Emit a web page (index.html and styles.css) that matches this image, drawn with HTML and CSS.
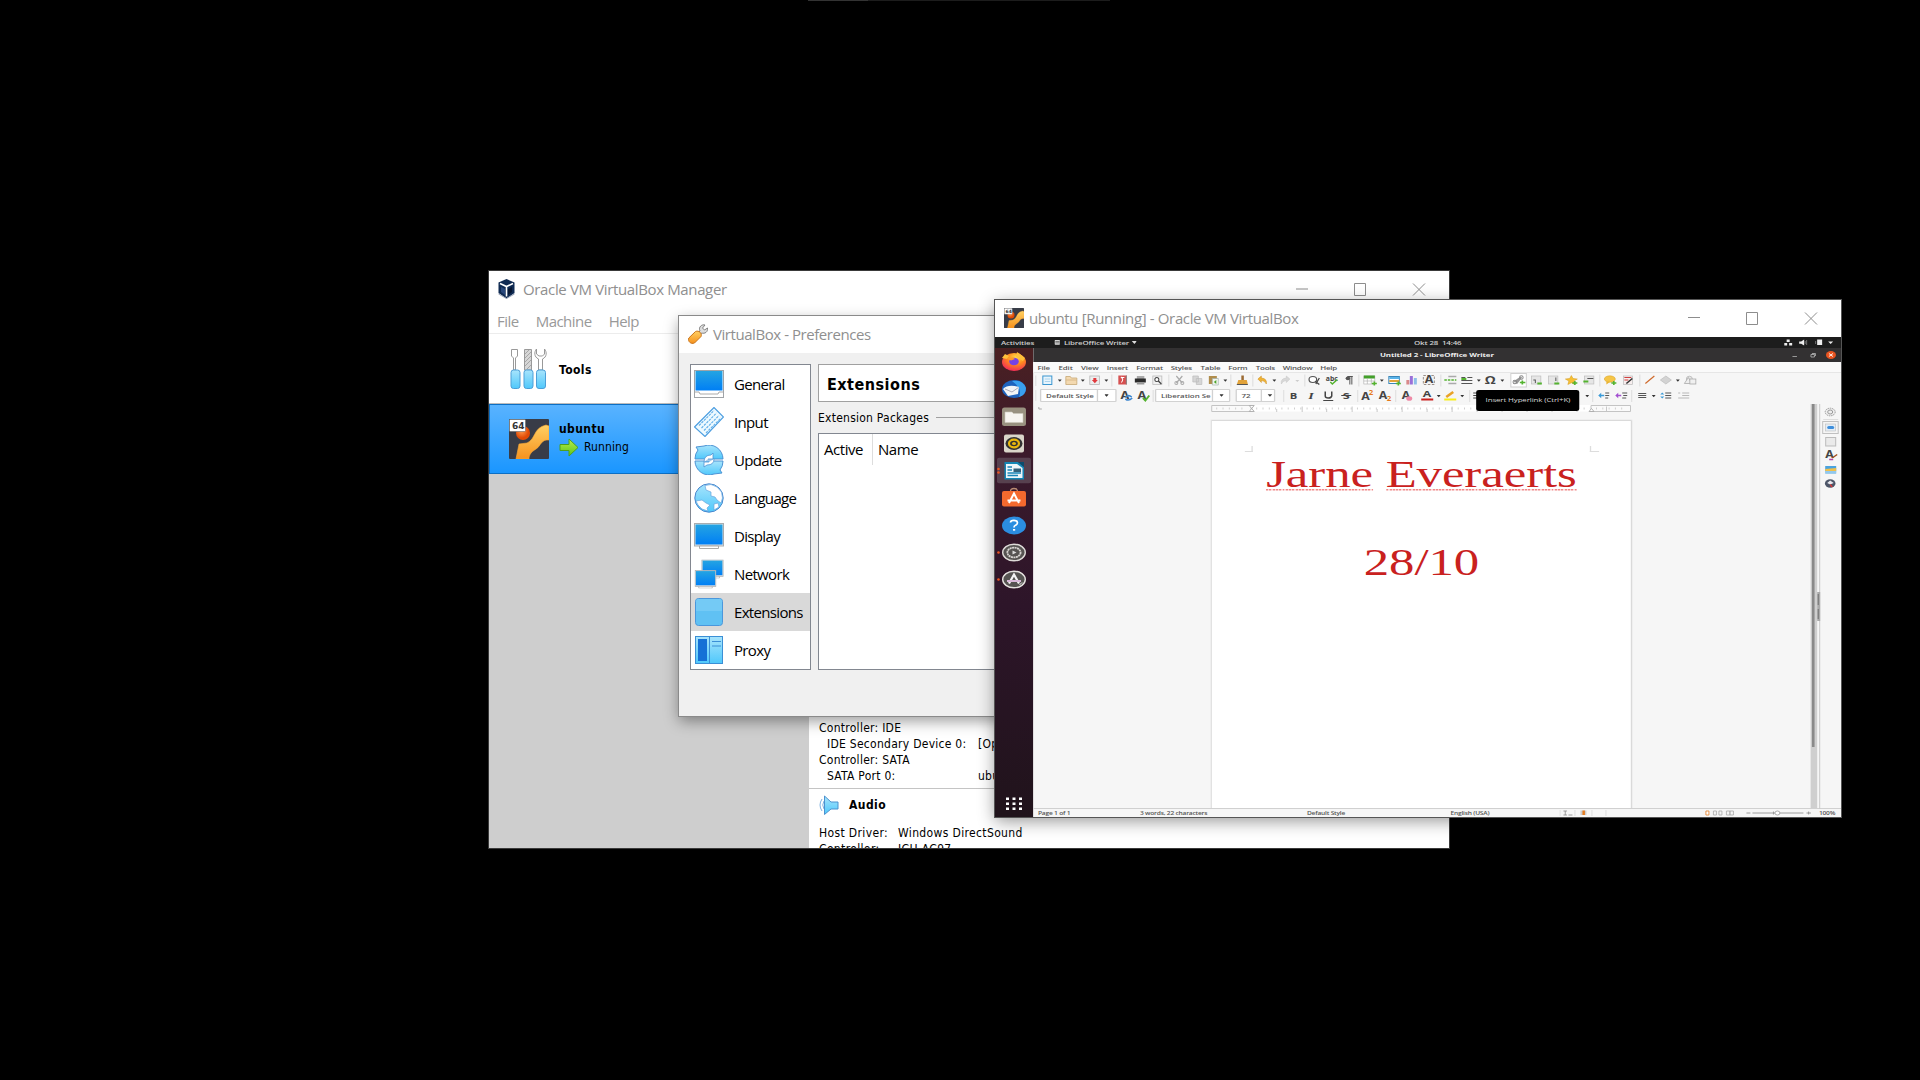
FILE: index.html
```html
<!DOCTYPE html>
<html lang="en">
<head>
<meta charset="utf-8">
<title>Desktop</title>
<link rel="stylesheet" href="styles.css">
</head>
<body>
<svg class="defs" width="0" height="0">
  <defs>
    <linearGradient id="blue" x1="0" y1="0" x2="0" y2="1"><stop offset="0" stop-color="#25a4e2"/><stop offset="1" stop-color="#007ff5"/></linearGradient>
    <linearGradient id="sky" x1="0" y1="0" x2="0" y2="1"><stop offset="0" stop-color="#a8e4fc"/><stop offset="1" stop-color="#4fc8fb"/></linearGradient>
    <linearGradient id="orange" x1="0" y1="0" x2="0" y2="1"><stop offset="0" stop-color="#ffd063"/><stop offset="1" stop-color="#f6921e"/></linearGradient>
    <radialGradient id="ball" cx=".4" cy=".35"><stop offset="0" stop-color="#ff9a4d"/><stop offset="1" stop-color="#e04a05"/></radialGradient>
    <linearGradient id="leaf" x1="0" y1="0" x2="0" y2="1"><stop offset="0" stop-color="#b9ee4c"/><stop offset="1" stop-color="#5cc41b"/></linearGradient>
    <radialGradient id="fox" cx=".6" cy=".25" r=".8"><stop offset="0" stop-color="#ffe14a"/><stop offset=".45" stop-color="#ff8a1e"/><stop offset="1" stop-color="#f0245c"/></radialGradient>
    <symbol id="vm" viewBox="0 0 40 40">
      <rect width="40" height="40" rx="1" fill="#383c47"/>
      <path d="M7 40 10 25 18 24C27 20 24 9 37 6L40 7V21C32 20 32 27 27 30 22 33 20 36 20 40Z" fill="url(#orange)" stroke="#f9a835" stroke-width=".6"/>
      <circle cx="14" cy="14" r="7" fill="url(#ball)"/>
      <rect x=".5" y=".5" width="16" height="12" rx="1" fill="#fff" stroke="#666" stroke-width=".6"/>
      <text x="3" y="10" class="bit">64</text>
    </symbol>
    <symbol id="screen" viewBox="0 0 30 26"><rect x=".5" y=".5" width="29" height="22.5" fill="#dfe3e5" stroke="#a9adb0"/><rect x="1.5" y="1.5" width="27" height="20" fill="url(#blue)"/><path d="M5.5 23H24.5V25.5H5.5Z" fill="#fff" stroke="#aaa"/></symbol>
    <symbol id="dn" viewBox="0 0 4 3"><path d="M0 .5H4L2 2.7Z" fill="#333"/></symbol>
  </defs>
</svg>
<div class="strip"></div>

<section class="window manager">
  <header class="caption">
    <svg class="logo" viewBox="0 0 17 20"><path d="M8.500 0 16.500 3.500V14L8.500 19.500.500 14V3.500Z" fill="#0f2a52"/><path d="M2 4.500 8.500 7.500 15 4.500M8.500 7.500V17.500" stroke="#fff" stroke-width="1.600" fill="none"/><path d="M3 8 7 10V16L3 13Z" fill="#29487c"/><path d="M14 8 10 10V16L14 13Z" fill="#06152f"/><path d="M.500 15 8.500 19.500 16.500 15" stroke="#9aa5b8" fill="none"/></svg>
    <h1>Oracle VM VirtualBox Manager</h1>
    <svg class="controls" viewBox="0 0 130 13"><path d="M0 6H12M58.500.500H69.500V12.500H58.500ZM117 .500 129 12.500M129 .500 117 12.500" stroke="#8d8d8d" fill="none"/></svg>
  </header>
  <nav class="menubar"><span>File</span><span>Machine</span><span>Help</span></nav>
  <div class="split">
    <div class="vmlist">
      <div class="entry">
        <svg class="big" viewBox="0 0 40 42"><g stroke="#999" fill="#fff"><path d="M2.500 1.500H8.500V8L6.500 10V22H4.500V10L2.500 8Z"/><path d="M15.500 1.500H22.500V22H15.500Z" fill="#d6d6d6"/><path d="M27.500 1C25 4 25 9 29.500 11V22H33.500V11C38 9 38 4 35.500 1V6L33.500 8H30L27.500 6Z"/></g><path d="M16 6 20 2M16 10 22 4M16 14 22 8M16 18 22 12M18 21 22 17" stroke="#999" stroke-width=".8"/><g fill="url(#sky)" stroke="#4c9fd8"><rect x="2" y="22" width="9" height="18.500" rx="2.500"/><rect x="15" y="22" width="9" height="18.500" rx="2.500"/><rect x="27.500" y="22" width="9" height="18.500" rx="2.500"/></g></svg>
        <b>Tools</b>
      </div>
      <div class="entry active">
        <svg class="big vm" viewBox="0 0 40 40"><use href="#vm"/></svg>
        <div><b>ubuntu</b><p><svg class="run" viewBox="0 0 20 19"><path d="M1 6.500H10V1L19 9.500 10 18V12.500H1Z" fill="url(#leaf)" stroke="#4ea01c"/></svg>Running</p></div>
      </div>
    </div>
    <div class="details">
      <dl class="storage">
        <dt>Controller: IDE</dt><dd></dd>
        <dt class="sub">IDE Secondary Device 0:</dt><dd>[Op</dd>
        <dt>Controller: SATA</dt><dd></dd>
        <dt class="sub">SATA Port 0:</dt><dd>ubu</dd>
      </dl>
      <h2><svg viewBox="0 0 20 20"><path d="M3 4Q-1 10 3 16M5 6Q2.500 10 5 14" fill="none" stroke="#7fb2e0"/><path d="M5.500 1 12 7H19V14H12L5.500 19.500Z" fill="url(#sky)" stroke="#4c92cf"/></svg>Audio</h2>
      <dl class="audio">
        <dt>Host Driver:</dt><dd>Windows DirectSound</dd>
        <dt>Controller:</dt><dd>ICH AC97</dd>
      </dl>
    </div>
  </div>
</section>

<section class="window prefs">
  <header class="caption">
    <svg class="logo" viewBox="0 0 20 20"><path d="M9 10 12 7C10 3 14 0 17 1L14.500 4 16.500 6 19.500 4C20 8 17 10 13.500 9L11 12Z" fill="#ddd" stroke="#777" stroke-width=".900"/><path d="M.800 14 7.500 7.500C11 6 14.500 9.500 13 12.500L6.500 19C3 20.500 -.500 17.500 .800 14Z" fill="url(#orange)" stroke="#c9741a"/></svg>
    <h1>VirtualBox - Preferences</h1>
  </header>
  <div class="panes">
    <ul class="pages">
      <li><svg viewBox="0 0 30 28"><rect x=".500" y=".500" width="29" height="27" fill="#fff" stroke="#a0a4a8"/><rect x="1.500" y="1" width="27" height="19.500" fill="url(#blue)"/><path d="M1 22H5L6 24H24L25 22H29" fill="none" stroke="#aaa"/></svg>General</li>
      <li><svg viewBox="0 0 30 30"><path d="M.500 20 20 .500 29.500 10 11 29.500Z" fill="#eefaff" stroke="#4d9ee0" stroke-width="1.200"/><path d="M5 18.500 20 3.500M7.500 21 22.500 6M10 23.500 25 8.500M12 26 27 11" stroke="#68b2ea" stroke-width="1.200" stroke-dasharray="2.500 1"/></svg>Input</li>
      <li><svg viewBox="0 0 30 30"><path d="M1 14A14 14 0 0 1 4 5L2 2 10 1A14 14 0 0 1 29 14Z" fill="url(#sky)" stroke="#4d93d4"/><path d="M29 16A14 14 0 0 1 26 25L28 28 20 29A14 14 0 0 1 1 16Z" fill="url(#sky)" stroke="#4d93d4"/><path d="M10 17Q10 10 17 10L19 8V14H14M20 14Q20 20 13 20L10 22V17H15" fill="#fff" stroke="#4d93d4" stroke-width=".800"/></svg>Update</li>
      <li><svg viewBox="0 0 30 30"><circle cx="15" cy="15" r="14.200" fill="url(#sky)" stroke="#4a86cd"/><path d="M11 2.500 17 1.500 23 4 27.500 9 28.500 15 27 20 23 17 21 14 17 13 17 9 12 7ZM2 18 8 17 12 20 16 22 13 25 14 28 8 26 4 22ZM20 21 24 20 25 24 20 27Z" fill="#fff" stroke="#6aa6de" stroke-width=".700"/></svg>Language</li>
      <li><svg viewBox="0 0 30 26"><use href="#screen"/></svg>Display</li>
      <li><svg viewBox="0 0 30 29"><use href="#screen" x="7" y="0" width="23" height="19"/><use href="#screen" x="0" y="10.500" width="23" height="18.500"/></svg>Network</li>
      <li class="on"><svg viewBox="0 0 30 30"><rect x="1.500" y="1.500" width="27" height="27" rx="3" fill="#60c1f3" stroke="#4a97dc"/><path d="M2 14V4Q2 2 4 2H26Q28 2 28 4V14Z" fill="#74caf5"/></svg>Extensions</li>
      <li><svg viewBox="0 0 30 30"><rect x="1.500" y="1.500" width="27" height="27" fill="url(#sky)" stroke="#3b8fd6"/><rect x="4" y="4" width="9" height="22" fill="#1570d6"/><path d="M15.500 2V28M18 6.500H27M18 11H27" stroke="#3b8fd6"/></svg>Proxy</li>
    </ul>
    <div class="page">
      <h2>Extensions</h2>
      <div class="group"><span>Extension Packages</span></div>
      <div class="table"><span>Active</span><span>Name</span></div>
    </div>
  </div>
</section>

<section class="window guestwin">
  <header class="caption">
    <svg class="logo" viewBox="0 0 40 40"><use href="#vm"/></svg>
    <h1>ubuntu [Running] - Oracle VM VirtualBox</h1>
    <svg class="controls" viewBox="0 0 130 13"><path d="M0 5.500H12M58.500.500H69.500V12.500H58.500ZM117 .500 129 12.500M129 .500 117 12.500" stroke="#8d8d8d" fill="none"/></svg>
  </header>
  <div class="guest">
    <div class="topbar">
      <span class="act">Activities</span>
      <svg class="appicon" viewBox="0 0 7 7" preserveAspectRatio="none"><rect width="7" height="6.500" rx="1" fill="#ddd"/><path d="M1 2H6M1 4H6" stroke="#333" stroke-width=".8"/></svg>
      <span class="app">LibreOffice Writer</span><i class="caret"></i>
      <span class="clock">Okt 28&nbsp; 14:46</span>
      <svg class="tray" viewBox="1784 337 57 11" preserveAspectRatio="none"><g fill="#eee"><rect x="1786.500" y="339.500" width="3" height="2.500"/><rect x="1784" y="343" width="3" height="2.500"/><rect x="1789" y="343" width="3" height="2.500"/><path d="M1799 341.500H1801L1804 339.500V345.500L1801 343.800H1799ZM1828 341.500H1833L1830.500 344Z"/><rect x="1817" y="339.500" width="5" height="5.500"/></g><path d="M1805 341V344M1806.500 340V345M1815.500 341V344" stroke="#888" stroke-width=".8"/></svg>
    </div>
    <div class="desktop">
      <div class="dock">
        <svg viewBox="0 0 38 27.3" preserveAspectRatio="none"><ellipse cx="19" cy="14" rx="12" ry="9" fill="url(#fox)"/><path d="M7 10 10 6 14 8 12 11ZM22 4 25 6 30 10 28 13 21 9Z" fill="#ffc13b"/><ellipse cx="19" cy="13.500" rx="4.800" ry="3.800" fill="#7542e5"/><path d="M11 10 18 9.500 20 11 16 12.500Z" fill="#ff9a2c"/></svg>
        <svg viewBox="0 0 38 27.3" preserveAspectRatio="none"><ellipse cx="19" cy="14" rx="12" ry="9" fill="#1f63bd"/><path d="M17 6Q28 4 31 13 31 20 24 22 28 14 17 6" fill="#3aa0ee"/><path d="M8 14Q13 9 24 12L23 19 13 21Z" fill="#f3f5f7"/><path d="M10 14 17 17 23.500 12.500" fill="none" stroke="#aab"/></svg>
        <svg viewBox="0 0 38 27.3" preserveAspectRatio="none"><rect x="7" y="4.500" width="24" height="18.500" rx="2.500" fill="#999280"/><path d="M10 9H17L18.500 10.500H28V19.500H10Z" fill="#f7f5f0" stroke="#ccc7ba" stroke-width=".6"/></svg>
        <svg viewBox="0 0 38 27.3" preserveAspectRatio="none"><rect x="9" y="4.500" width="20" height="18" rx="2" fill="#dad6ca"/><ellipse cx="19" cy="13.500" rx="8.500" ry="6.500" fill="#333"/><ellipse cx="19" cy="13.500" rx="5" ry="3.800" fill="#333" stroke="#e8b70e" stroke-width="2.200"/><ellipse cx="19" cy="13.500" rx="2" ry="1.500" fill="#e8b70e"/></svg>
        <svg viewBox="0 0 38 27.3" preserveAspectRatio="none"><rect x="2" y=".800" width="34" height="25.500" rx="2" fill="#57414f"/><circle cx="3.500" cy="12" r="1.300" fill="#e95420"/><circle cx="3.500" cy="15.500" r="1.300" fill="#e95420"/><path d="M9.500 5H23L29 10V22.500H9.500Z" fill="#1587b5"/><path d="M23 5H29V10Z" fill="#0c4d6e"/><path d="M11 7H22L27.500 11V21H11Z" fill="#eef6fa"/><path d="M12.500 10H17M12.500 13H17M12.500 16H26M12.500 18.500H23" stroke="#1b86b8" stroke-width="1.300"/><rect x="18.500" y="11.500" width="7.500" height="3.500" fill="#33617a"/></svg>
        <svg viewBox="0 0 38 27.3" preserveAspectRatio="none"><path d="M15.500 7.500Q15.500 4.500 19 4.500T22.500 7.500" stroke="#b98b72" fill="none" stroke-width="1.300"/><rect x="7" y="7" width="24" height="15.500" rx="2" fill="#f4692e"/><path d="M14 19 19 9.500 24 19M12.500 16.500H25.500" stroke="#fff" stroke-width="2" fill="none"/></svg>
        <svg viewBox="0 0 38 27.3" preserveAspectRatio="none"><ellipse cx="19" cy="13.500" rx="12" ry="9" fill="#2b8de0"/><path d="M15.500 10.500Q15.500 8.300 19 8.300T22.500 10.800Q22.500 12.300 20.500 13.200 19 13.800 19 15.500" stroke="#fff" stroke-width="1.700" fill="none"/><rect x="18" y="17" width="2.200" height="1.700" fill="#fff"/></svg>
        <svg viewBox="0 0 38 27.3" preserveAspectRatio="none"><circle cx="3.500" cy="13.500" r="1.300" fill="#e95420"/><ellipse cx="19" cy="13.500" rx="11.300" ry="8.300" fill="#565452" stroke="#dedbd8" stroke-width="1.400"/><ellipse cx="19" cy="13.500" rx="6.600" ry="4.900" fill="none" stroke="#d8d5d2" stroke-width="1.800" stroke-dasharray="2 .500"/><path d="M17.500 11.500 21.500 13.500 17.500 15.500Z" fill="#ddd"/></svg>
        <svg viewBox="0 0 38 27.3" preserveAspectRatio="none"><circle cx="3.500" cy="13.500" r="1.300" fill="#e95420"/><ellipse cx="19" cy="13.500" rx="11.300" ry="8.300" fill="#565452" stroke="#e6e3e0" stroke-width="1.400"/><path d="M14 17.500 19 8.500 24 17.500" stroke="#f4f4f4" stroke-width="2.200" fill="none"/><path d="M12 15H26" stroke="#d9b9da" stroke-width="1.800"/><path d="M27 16.500 24.500 19" stroke="#eee"/></svg>
        <svg class="apps" viewBox="0 0 38 27.3" preserveAspectRatio="none"><g fill="#fff"><path d="M11 7.500h3v2.500h-3zM17.500 7.500h3v2.500h-3zM24 7.500h3v2.500h-3zM11 12.500h3v2.500h-3zM17.500 12.500h3v2.500h-3zM24 12.500h3v2.500h-3zM11 17.500h3v2.500h-3zM17.500 17.500h3v2.500h-3zM24 17.500h3v2.500h-3z"/></g></svg>
      </div>
      <div class="writer">
        <div class="wtitle"><span>Untitled 2 - LibreOffice Writer</span>
          <svg viewBox="1790 348 51 14" preserveAspectRatio="none"><path d="M1793 356.500H1797.500" stroke="#999"/><path d="M1811.500 354.500H1815V357H1811.500ZM1812.500 353.500H1816V356" stroke="#bbb" fill="none" stroke-width=".8"/><ellipse cx="1831.500" cy="355" rx="5" ry="4" fill="#e95420"/><path d="M1829.500 353.500 1833.500 356.500M1833.500 353.500 1829.500 356.500" stroke="#fff" stroke-width=".9"/></svg>
        </div>
        <nav class="wmenu"><span>File</span><span>Edit</span><span>View</span><span>Insert</span><span>Format</span><span>Styles</span><span>Table</span><span>Form</span><span>Tools</span><span>Window</span><span>Help</span></nav>
        <svg class="tools" viewBox="1033 373 808 15" preserveAspectRatio="none">
          <path d="M1035.500 375.500V386M1111.500 374.500V386.500M1168.500 374.500V386.500M1230.500 374.500V386.500M1304.500 374.500V386.500M1358.500 374.500V386.500M1440.500 374.500V386.500M1599.500 374.500V386.500M1639.500 374.500V386.500M1252.500 374.500V386.500" stroke="#dcdcdc"/>
          <g><use href="#dn" x="1057.5" y="379" width="4" height="3"/><use href="#dn" x="1080.500" y="379" width="4" height="3"/><use href="#dn" x="1104" y="379" width="4" height="3"/><use href="#dn" x="1223" y="379" width="4" height="3"/><use href="#dn" x="1272" y="379" width="4" height="3"/><use href="#dn" x="1379.500" y="379" width="4" height="3"/><use href="#dn" x="1476.500" y="379" width="4" height="3"/><use href="#dn" x="1500" y="379" width="4" height="3"/><use href="#dn" x="1675.500" y="379" width="4" height="3"/></g>
          <path d="M1295 380H1299L1297 382Z" fill="#ccc"/>
          <path d="M1042.500 376H1051.500V384.500H1042.500Z" fill="#e8f5fd" stroke="#3b96d0"/><path d="M1044.500 379H1050M1044.500 381.500H1050" stroke="#9ccbe8" stroke-width=".8"/>
          <path d="M1065.500 376.500H1070L1071 378H1076.500V384.500H1065.500Z" fill="#f3d9b0" stroke="#c7a775" stroke-width=".8"/><path d="M1065.500 380H1076.500" stroke="#d9b98a"/>
          <rect x="1089.500" y="376" width="9.500" height="8.500" fill="#eee" stroke="#b5b5b5" stroke-width=".8"/><path d="M1093 378H1096V380H1097.500L1094.500 383.300 1091.500 380H1093Z" fill="#e03a3e"/>
          <rect x="1118" y="375.500" width="8.500" height="9" fill="#d65050"/><path d="M1120.500 377Q1124 379 1121 382.500M1121 377.500H1124" stroke="#fff" fill="none"/><path d="M1126 375.500V384.500" stroke="#888"/>
          <path d="M1136.500 376H1144V379H1136.500Z" fill="#aaa"/><rect x="1134.500" y="378.500" width="11" height="4" fill="#2b2b2b"/><rect x="1136.500" y="382" width="7.500" height="2.500" fill="#999"/>
          <rect x="1152.500" y="376" width="9" height="8.500" fill="#f1f1f1" stroke="#bbb" stroke-width=".8"/><circle cx="1156.500" cy="379.500" r="2" fill="#fff" stroke="#444"/><path d="M1158 381 1161 384" stroke="#444" stroke-width="1.300"/>
          <path d="M1176 376 1182 383M1182 376 1176 383" stroke="#aaa" stroke-width="1.200"/><circle cx="1176" cy="383" r="1.500" fill="none" stroke="#aaa"/><circle cx="1182" cy="383" r="1.500" fill="none" stroke="#aaa"/>
          <path d="M1192.500 376H1198V382H1192.500ZM1196 378.500H1201.500V384.500H1196Z" fill="#d6d6d6" stroke="#bbb" stroke-width=".7"/>
          <rect x="1208.500" y="376" width="8" height="8" fill="#b08d4c"/><path d="M1212 378.500H1218V385H1212Z" fill="#f1f6ee" stroke="#9aa" stroke-width=".6"/><path d="M1213.500 382 1216 380V384Z" fill="#4ba32c"/>
          <path d="M1241 375.500H1243.500V380H1241Z" fill="#9b6a33"/><path d="M1238 380H1246.500L1247.500 384.500H1236.500Z" fill="#e2a33a"/><path d="M1236.500 384.500H1247.500" stroke="#555"/>
          <path d="M1257.500 379 1261 376V378Q1267 378.500 1266 384 1264.500 380.500 1261 380.500V382.500Z" fill="#efb336" stroke="#cb8b1a" stroke-width=".5"/>
          <path d="M1289.500 379 1286 376V378Q1280 378.500 1281 384 1282.500 380.500 1286 380.500V382.500Z" fill="#d8d8d8" stroke="#c3c3c3" stroke-width=".5"/>
          <ellipse cx="1312.500" cy="379.500" rx="3.800" ry="3" fill="#fff" stroke="#555" stroke-width="1.200"/><path d="M1315 381.500 1319 384.500M1319 378 1315.500 384" stroke="#444" stroke-width="1.300"/>
          <text x="1325.500" y="381.500" class="ico s7" textLength="12" lengthAdjust="spacingAndGlyphs">abc</text><path d="M1330 382 1332 384 1337 379.500" stroke="#54b330" fill="none" stroke-width="1.500"/>
          <path d="M1351.500 376.500V384.500M1349.500 376.500V384.500M1352.500 376.500H1347" stroke="#555" fill="none"/><ellipse cx="1347.500" cy="378.300" rx="2.200" ry="1.900" fill="#555"/>
          <rect x="1363.500" y="376" width="11" height="8" fill="#fff" stroke="#aaa" stroke-width=".6"/><path d="M1363.500 375.500H1374.500V378.500H1363.500Z" fill="#43a02a"/><path d="M1367 378V384M1371 378V384M1363.500 381H1374.500" stroke="#aaa" stroke-width=".6"/><path d="M1371.500 383.500H1376.500M1374 381.500V385.500" stroke="#54b330" stroke-width="1.600"/>
          <rect x="1388.500" y="376.500" width="10.500" height="7" fill="#fff" stroke="#3a86b8"/><path d="M1389 380H1399V382H1389Z" fill="#e2a33a"/><path d="M1389 377H1399V379H1389Z" fill="#5ab4ea"/><path d="M1395.500 383.500H1400.500M1398 381.500V385.500" stroke="#54b330" stroke-width="1.600"/>
          <path d="M1406 380H1409V384.500H1406Z" fill="#d98a8a"/><path d="M1409.500 376H1412.500V384.500H1409.500Z" fill="#9a6fd8"/><path d="M1413.500 378H1416.500V384.500H1413.500Z" fill="#8fbfe8"/>
          <rect x="1423" y="375.500" width="11" height="9" fill="#f3f3f3" stroke="#9a8f88" stroke-dasharray="2.500 1.500"/><text x="1424.500" y="383.500" class="ico s10" textLength="8.500" lengthAdjust="spacingAndGlyphs">A</text>
          <path d="M1448 376.500H1456M1448 383.500H1456" stroke="#aaa" stroke-width="1.500"/><path d="M1444 380H1456" stroke="#54b330" stroke-width="1.500" stroke-dasharray="2.500 1"/>
          <path d="M1461 377.500H1465M1467 377.500H1472M1461 380.500H1472M1461 383.500H1472" stroke="#555" stroke-width="1.100"/><path d="M1461 379H1466" stroke="#54b330" stroke-width="2"/>
          <text x="1484.500" y="384" class="ico s10" textLength="11" lengthAdjust="spacingAndGlyphs">Ω</text>
          <rect x="1510.500" y="373.500" width="15.500" height="13.500" fill="#fff" stroke="#d0d0d0"/><path d="M1514 382 1519 378.500M1516 383.500 1521 377" stroke="#999" stroke-width="2"/><circle cx="1514.500" cy="382" r="1.800" fill="none" stroke="#888"/><circle cx="1521" cy="377.500" r="1.800" fill="none" stroke="#888"/><path d="M1519.500 382.500H1525M1522 380.500V384.500" stroke="#54b330" stroke-width="1.700"/>
          <g fill="#e6e6e6" stroke="#bdbdbd" stroke-width=".7"><rect x="1531" y="376" width="9.500" height="8"/><rect x="1548" y="376" width="9.500" height="8"/><rect x="1584" y="376" width="9.500" height="8"/></g><path d="M1533 380H1535V383M1555.500 377.500V381M1587 378.500H1593" stroke="#555" fill="none"/><path d="M1537 383.500H1541.500M1554 383.500H1559M1583 381.500H1588" stroke="#54b330" stroke-width="2"/>
          <path d="M1571 375.500 1572.700 378.500 1577 379 1573.500 381 1574.500 384.500 1571 382.800 1567.500 384.500 1568.500 381 1565 379 1569.300 378.500Z" fill="#f7bf33" stroke="#d29a1c" stroke-width=".5"/><path d="M1572 383H1577M1574.500 381V385" stroke="#54b330" stroke-width="1.600"/>
          <ellipse cx="1609.500" cy="379" rx="5.500" ry="3.200" fill="#f5c547" stroke="#d8a021" stroke-width=".5"/><path d="M1606 381.500V384.500L1609.500 382Z" fill="#e8b232"/><path d="M1611 383H1616M1613.500 381V385" stroke="#54b330" stroke-width="1.600"/>
          <rect x="1623" y="376" width="9" height="8.500" fill="#f7eeee" stroke="#bbb" stroke-width=".7"/><path d="M1624 377.500H1631M1624 380H1628" stroke="#d04040"/><path d="M1626 383.500 1632 378.500" stroke="#333" stroke-width="1.600"/>
          <path d="M1645 383.500 1654 376" stroke="#cf6a2c" stroke-width="1.200"/>
          <path d="M1660 380 1665.500 376 1671 380 1665.500 384Z" fill="#d3d3d3" stroke="#b5b5b5" stroke-width=".6"/>
          <ellipse cx="1689" cy="379" rx="3" ry="2.800" fill="#e6e6e6" stroke="#b5b5b5" stroke-width=".8"/><path d="M1684 383.500 1688 377.500 1691.500 383.500Z" fill="#eee" stroke="#aaa" stroke-width=".8"/><rect x="1689.500" y="379" width="6" height="5" fill="#f0f0f0" stroke="#aaa" stroke-width=".8"/>
        </svg>
        <div class="format">
          <svg class="grip" viewBox="1033 388 7 15" preserveAspectRatio="none"><path d="M1035.500 390.500V401" stroke="#ccc" stroke-dasharray="1 1"/></svg>
          <div class="combo style"><span>Default Style</span><i></i></div>
          <svg class="upd" viewBox="1115 388 40 15" preserveAspectRatio="none"><text x="1119" y="399" class="ico s10" textLength="9" lengthAdjust="spacingAndGlyphs">A</text><path d="M1124 397.500Q1127 394 1130.500 397M1131 398Q1127.500 401.500 1124 399" stroke="#3b86d0" stroke-width="1.600" fill="none"/><text x="1136.500" y="399" class="ico s10" textLength="9" lengthAdjust="spacingAndGlyphs">A</text><path d="M1142 398 1144.500 400.500 1148.500 395.500" stroke="#54b330" stroke-width="2" fill="none"/><path d="M1152.500 390V402" stroke="#ddd"/></svg>
          <div class="combo font"><span>Liberation Se</span><i></i></div>
          <div class="combo size"><span>72</span><i></i></div>
          <svg class="char" viewBox="1275 388 566 15" preserveAspectRatio="none">
            <path d="M1283.500 390V402M1357.500 390V402M1395.500 390V402M1469.500 390V402M1592.500 390V402M1631.500 390V402" stroke="#ddd"/>
            <text x="1289.500" y="399" class="ico s9" textLength="7.500" lengthAdjust="spacingAndGlyphs">B</text>
            <text x="1308" y="399" class="ico s9 it" textLength="5.500" lengthAdjust="spacingAndGlyphs">I</text>
            <path d="M1325 391.500V396Q1325 398 1328 398T1331.500 396V391.500" stroke="#444" stroke-width="1.500" fill="none"/><path d="M1323 400.500H1333" stroke="#444"/>
            <text x="1342.500" y="399" class="ico s9" textLength="7" lengthAdjust="spacingAndGlyphs">S</text><path d="M1341 395.500H1351" stroke="#444"/>
            <text x="1361" y="400" class="ico s10" textLength="8.500" lengthAdjust="spacingAndGlyphs">A</text><text x="1368.500" y="395" class="ico s6 o" textLength="4.500" lengthAdjust="spacingAndGlyphs">2</text>
            <text x="1378.500" y="399" class="ico s10" textLength="8.500" lengthAdjust="spacingAndGlyphs">A</text><text x="1386.500" y="401" class="ico s6 o" textLength="4.500" lengthAdjust="spacingAndGlyphs">2</text>
            <text x="1401.500" y="399" class="ico s10" textLength="8.500" lengthAdjust="spacingAndGlyphs">A</text><ellipse cx="1409" cy="398.500" rx="3" ry="2.300" fill="#ee8aa6"/>
            <text x="1422.500" y="397.500" class="ico s9" textLength="8.500" lengthAdjust="spacingAndGlyphs">A</text><rect x="1421" y="398.500" width="12" height="2" fill="#c9211e"/>
            <path d="M1446 397 1453 392" stroke="#e9a227" stroke-width="2.600"/><rect x="1444" y="398.500" width="12" height="2" fill="#f8ee1c"/>
            <path d="M1473 393H1480M1473 395.500H1480M1473 398H1480" stroke="#444"/>
            <use href="#dn" x="1436.500" y="394.500" width="4" height="3"/><use href="#dn" x="1460" y="394.500" width="4" height="3"/><use href="#dn" x="1585" y="394.500" width="4" height="3"/><use href="#dn" x="1651.500" y="394.500" width="4" height="3"/>
            <path d="M1605 393H1609M1605 395.500H1609M1605 398H1608M1622 393H1627M1623 395.500H1627M1622 398H1626" stroke="#555"/><path d="M1598 395.500 1601 392.800V394.700H1604V396.300H1601V398.200Z" fill="#3b9bd8"/><path d="M1615 395.500 1618 392.800V394.700H1621V396.300H1618V398.200Z" fill="#a34fd0"/>
            <path d="M1638 393.500H1646M1638 395.500H1646M1638 397.500H1646M1665 393H1671M1665 395.500H1671M1665 398H1671" stroke="#555" stroke-width="1.200"/><path d="M1660 394.500 1662 392.500 1664 394.500ZM1660 396.500 1662 398.500 1664 396.500Z" fill="#3b9bd8"/><path d="M1678 393H1680M1682 393H1689M1682 395.500H1689M1678 398H1689" stroke="#b8b8b8" stroke-width="1.100"/>
          </svg>
          <div class="tip">Insert Hyperlink (Ctrl+K)</div>
        </div>
        <div class="work">
          <div class="canvas">
            <svg class="ruler" viewBox="1033 403 778 18" preserveAspectRatio="none"><path d="M1038.500 407V409H1041.500" stroke="#aaa" fill="none"/><rect x="1251" y="405" width="340" height="6.500" fill="#fff"/><path d="M1251 405.500H1211.500V411.500H1251ZM1591 405.500H1630.500V411.500H1591Z" stroke="#c4c4c4" fill="#fafafa"/><path d="M1216 408.500H1246M1256 408.500H1590M1596 408.500H1627" stroke="#d0d0d0" stroke-width="2" stroke-dasharray="1 5.300"/><path d="M1276.500 409V412M1302 406.500V412M1326.500 409V412M1352 406.500V412M1377 409V412M1402 406.500V412M1427 409V412M1452 406.500V412M1477 409V412M1502 406.500V412M1527 409V412M1552 409V412M1577 409V412M1606.500 406.500V411" stroke="#bbb" stroke-width=".8"/><path d="M1249 405.500H1254L1249 411.500H1254ZM1589 411.500 1591.500 408.500 1594 411.500Z" stroke="#aaa" fill="#fff" stroke-width=".9"/></svg>
            <article class="paper">
              <div class="marks"><i></i><i></i></div>
              <p><u>Jarne</u> <u>Everaerts</u></p>
              <p>&nbsp;</p>
              <p>28/10</p>
            </article>
          </div>
          <div class="scroll"><i></i></div>
          <svg class="side" viewBox="1817 404 24 405" preserveAspectRatio="none">
            <path d="M1819.500 404V809" stroke="#c9c9c9"/><rect x="1816.500" y="592" width="3.500" height="29" fill="#aaa"/><path d="M1818 594V605M1818 609V619" stroke="#777" stroke-width="1.200"/>
            <ellipse cx="1830" cy="412" rx="5" ry="3.800" fill="#eee" stroke="#999" stroke-dasharray="1.500 .700"/><ellipse cx="1830" cy="412" rx="2.500" ry="2" fill="none" stroke="#999"/>
            <path d="M1823 419.500H1838" stroke="#ddd"/><rect x="1822.500" y="421.500" width="15.500" height="12" fill="#f5f5f5" stroke="#c0c0c0"/><rect x="1825.500" y="424" width="10" height="7" fill="#e3edf6" stroke="#bbb" stroke-width=".6"/><rect x="1827" y="426" width="7" height="3" rx="1.500" fill="#3f8fdc"/>
            <rect x="1825.500" y="437.500" width="10" height="8.500" fill="#eaeaea" stroke="#bbb"/>
            <text x="1825" y="458.500" class="ico s10" textLength="8.500" lengthAdjust="spacingAndGlyphs">A</text><path d="M1832 458 1837 454.500" stroke="#a4511f" stroke-width="1.500"/><path d="M1829 459.500H1833" stroke="#b048a8" stroke-width="1.300"/>
            <path d="M1825 466H1836V473.500H1825Z" fill="#4aa3df"/><path d="M1825 469 1836 468V471H1825Z" fill="#f0c04a"/><path d="M1825 472H1836" stroke="#dceefb"/>
            <ellipse cx="1830" cy="483.500" rx="5.300" ry="4.200" fill="#4d5668"/><path d="M1827 483 1830 480.500 1833.500 483 1830 484.500Z" fill="#e8e8ee"/><path d="M1830 484.500 1832 487" stroke="#d23b3b" stroke-width="1.500"/>
          </svg>
        </div>
        <footer class="status">
          <span>Page 1 of 1</span><span>3 words, 22 characters</span><span>Default Style</span><span>English (USA)</span>
          <svg viewBox="1560 809 259 8" preserveAspectRatio="none"><path d="M1560.500 810V816M1575.500 810V816M1592.500 810V816M1606.500 810V816" stroke="#ddd"/><path d="M1564 811H1567.500M1565.800 811V815M1564 815H1567.500M1569 815H1573M1747 813H1751" stroke="#888" fill="none" stroke-width=".8"/><rect x="1581" y="810.500" width="6" height="4.500" fill="#ccc"/><rect x="1583" y="810.500" width="2.500" height="4.500" fill="#e67e22"/><path d="M1706.500 811H1709.500V815H1706.500Z" fill="#fff" stroke="#e67e22" stroke-width=".8"/><path d="M1714 811H1717V815H1714ZM1719.500 811H1722.500V815H1719.500ZM1727 811H1730.500V815H1727ZM1730.500 811H1734V815H1730.500Z" fill="none" stroke="#aaa" stroke-width=".8"/><path d="M1753 813H1804M1774 811.500V814.500M1807 813H1811.500M1809.200 811.500V814.500" stroke="#888" stroke-width=".8"/><ellipse cx="1778" cy="813" rx="2.500" ry="2" fill="#fff" stroke="#999" stroke-width=".8"/></svg>
          <span>100%</span>
        </footer>
      </div>
    </div>
  </div>
</section>
</body>
</html>
```
FILE: styles.css
```css
* { box-sizing: border-box; margin: 0; padding: 0; }
body { width: 1920px; height: 1080px; overflow: hidden; background: #000; position: relative; color: #000;
  font: 12px/16px "DejaVu Sans Condensed", "DejaVu Sans", sans-serif; white-space: nowrap; }
svg { display: block; flex: none; }
.defs { position: absolute; }
.strip { position: absolute; left: 808px; top: 0; width: 302px; height: 1px; background: linear-gradient(90deg, #333 20%, #1c1c1c 20%); }

/* windows */
.window { position: absolute; background: #fff; box-shadow: 0 0 0 1px #3a3a3a; display: flex; flex-direction: column; overflow: hidden; }
.caption { display: flex; align-items: center; background: #fff; flex: none; }
.caption h1 { font: 15px/20px "Open Sans", sans-serif; letter-spacing: -.36px; color: #8f8f8f; flex: 1; padding-bottom: 2px; }
.controls { width: 130px; height: 13px; }
.bit { font: bold 9px "DejaVu Sans", sans-serif; fill: #333; }

/* manager */
.manager { left: 489px; top: 271px; width: 960px; height: 577px; }
.manager .caption { height: 37px; padding: 0 23px 0 9px; }
.manager .logo { width: 17px; height: 20px; margin: 0 8px 1px 0; }
.manager .controls { margin-top: -1px; }
.menubar { height: 26px; border-bottom: 1px solid #ececec; display: flex; gap: 17px; padding: 2px 0 0 8px; font: 15px/22px "Open Sans", sans-serif; letter-spacing: -.52px; color: #999; flex: none; }
.split { flex: 1; display: flex; min-height: 0; }
.vmlist { width: 320px; background: #cecece; }
.entry { height: 70px; background: #fff; display: flex; align-items: center; padding-left: 20px; border-bottom: 1px solid #bbb; }
.entry b { letter-spacing: .42px; padding-top: 2px; }
.entry .big { width: 40px; height: 42px; margin-right: 10px; }
.entry.active { background: linear-gradient(#59b3ff, #1a96ff); border: 1px solid #0c6fc4; padding-left: 19px; }
.entry.active .vm { height: 40px; }
.entry.active p { display: flex; align-items: center; height: 20px; letter-spacing: .12px; }
.run { width: 20px; height: 19px; margin-right: 5px; }
.details { flex: 1; padding-top: 386px; overflow: hidden; letter-spacing: .27px; }
dl { display: grid; padding-left: 10px; grid-auto-rows: 16px; }
.storage { grid-template-columns: 159px auto; height: 69px; border-bottom: 1px solid #c4c4c4; }
.sub { padding-left: 8px; }
.details h2 { font: bold 12px/16px "DejaVu Sans Condensed", sans-serif; letter-spacing: .45px; display: flex; align-items: center; height: 36px; padding: 0 0 4px 10px; }
.details h2 svg { width: 20px; height: 20px; margin-right: 10px; }
.audio { grid-template-columns: 79px auto; letter-spacing: .36px; }

/* preferences */
.prefs { left: 679px; top: 316px; width: 640px; height: 400px; background: #f0f0f0; box-shadow: 0 0 0 1px #8a8a8a, 0 5px 14px rgba(0,0,0,.4); }
.prefs .caption { height: 37px; padding-left: 9px; }
.prefs .caption h1 { letter-spacing: -.44px; }
.prefs .logo { width: 20px; height: 20px; margin: 0 5px 2px 0; }
.panes { display: flex; padding: 11px 0 0 11px; gap: 7px; }
.pages { list-style: none; width: 121px; height: 306px; border: 1px solid #828790; background: #fff; font: 15px/20px "Open Sans", sans-serif; letter-spacing: -.66px; }
.pages li { display: flex; align-items: center; height: 38px; padding-left: 3px; }
.pages li.on { background: #d9d9d9; }
.pages svg { width: 30px; height: 30px; margin-right: 10px; }
.page { flex: 1; }
.page h2 { height: 38px; border: 1px solid #a0a0a0; background: #fff; font: bold 16px/39px "DejaVu Sans Condensed", sans-serif; letter-spacing: .5px; padding-left: 8px; }
.group { display: flex; align-items: center; gap: 7px; height: 31px; letter-spacing: .24px; }
.group span { padding-top: 1px; }
.group::after { content: ""; flex: 1; height: 1px; background: #a0a0a0; }
.table { height: 237px; border: 1px solid #828790; background: #fff; display: flex; font: 15px/31px "Open Sans", sans-serif; letter-spacing: -.45px; }
.table span { height: 31px; padding-left: 5px; }
.table span:first-child { width: 54px; border-right: 1px solid #ddd; }

/* running machine; the guest picture is stretched to the window's width */
.guestwin { left: 995px; top: 300px; width: 846px; height: 517px; box-shadow: 0 0 0 1px #555, 0 4px 16px rgba(0,0,0,.42); }
.guestwin .caption { height: 37px; padding: 0 23px 0 9px; }
.guestwin .logo { width: 20px; height: 20px; margin: 0 5px 1px 0; }
.guestwin .controls { margin-top: -1px; }
.guest { --k: 1.321875; width: 640px; height: 480px; transform: scaleX(1.321875); transform-origin: 0 0; font: 600 6px/8px "Open Sans", sans-serif; letter-spacing: -.12px; color: #555; flex: none; }
.topbar { height: 11px; background: #1d1d1d; color: #d0d0d0; display: flex; align-items: center; }
.act { width: calc(52px / var(--k)); padding-left: calc(6px / var(--k)); letter-spacing: -.12px; }
.appicon { width: calc(6px / var(--k)); height: 5px; margin: 0 calc(4px / var(--k)) 0 calc(7px / var(--k)); }
.app { letter-spacing: -.14px; }
.caret { width: 4px; height: 3px; background: #ddd; clip-path: polygon(0 0, 100% 0, 50% 100%); margin-left: 2px; }
.clock { margin-left: auto; width: calc(46px / var(--k)); }
.tray { width: calc(57px / var(--k)); height: 11px; margin-left: calc(324px / var(--k)); }
.desktop { display: flex; height: 469px; }
.dock { width: calc(38px / var(--k)); background: linear-gradient(#4a2022, #3a1a2c 25%, #2d1529 55%, #20131b); display: flex; flex-direction: column; }
.dock svg { width: 100%; height: 27.3px; }
.dock .apps { margin-top: auto; }
.writer { flex: 1; background: #f6f6f6; display: flex; flex-direction: column; min-width: 0; }
.wtitle { height: 14px; background: #333132; color: #eee; font-weight: 700; display: flex; align-items: center; padding-left: calc(347px / var(--k)); letter-spacing: -.08px; flex: none; }
.wtitle svg { width: calc(51px / var(--k)); height: 14px; margin-left: auto; }
.wmenu { height: 11px; border-bottom: 1px solid #e6e6e6; background: #fafafa; display: grid; align-items: center; padding: 1px 0 0 calc(4.500px / var(--k)); flex: none; letter-spacing: -.14px;
  grid-template-columns: 16px 17px 19.4px 22.3px 26.1px 22.5px 21px 20.800px 20.400px 28.400px auto; }
.tools { width: 100%; height: 15px; }
.format { position: relative; height: 15px; display: flex; align-items: center; flex: none; }
.grip { width: calc(7px / var(--k)); height: 15px; }
.combo { height: 13.500px; border: 1px solid #d2d2d2; background: #fff; display: flex; align-items: center; border-radius: 1px; padding-left: 3.500px; }
.combo span { flex: 1; }
.combo i { width: calc(17.500px / var(--k)); height: 100%; border-left: 1px solid #d2d2d2; display: flex; align-items: center; justify-content: center; }
.combo i::after { content: ""; width: 3.500px; height: 2.500px; background: #333; clip-path: polygon(0 0, 100% 0, 50% 100%); }
.style { width: calc(76px / var(--k)); letter-spacing: -.06px; }
.font { width: calc(76px / var(--k)); margin-right: calc(4px / var(--k)); letter-spacing: -.04px; }
.size { width: calc(40px / var(--k)); padding-left: 4px; }
.size i { width: calc(13px / var(--k)); justify-content: flex-end; padding-right: 1px; }
.upd { width: calc(39px / var(--k)); height: 15px; }
.char { width: calc(566px / var(--k)); height: 15px; }
.ico { font-family: "Open Sans", sans-serif; font-weight: 700; fill: #444; letter-spacing: 0; }
.s6 { font-size: 6.500px; } .s7 { font-size: 7px; } .s9 { font-size: 9px; } .s10 { font-size: 10px; }
.it { font-family: "Liberation Serif", serif; font-style: italic; } .o { fill: #e67a1c; }
.tip { position: absolute; z-index: 2; left: calc(443.500px / var(--k)); top: 1.500px; width: calc(103px / var(--k)); height: 21px; border-radius: 2px; background: #000; color: #d8d8d8; text-align: center; line-height: 20px; font-weight: 400; letter-spacing: -.1px; }
.work { flex: 1; display: flex; min-height: 0; border-bottom: 1px solid #d0d0d0; }
.canvas { flex: 1; overflow: hidden; display: flex; flex-direction: column; }
.ruler { width: 100%; height: 18px; }
.paper { width: calc(420px / var(--k)); height: 400px; margin-left: calc(178.500px / var(--k)); background: #fff; box-shadow: 0 0 1px .7px #d4d4d4; color: #c9211e; flex: none; }
.paper p { font: 38.400px/44.200px "Liberation Serif", serif; letter-spacing: -.04px; text-align: center; }
.paper u { text-decoration: none; background: repeating-linear-gradient(90deg, #f08a8a 0 1.500px, #fbd5d5 1.500px 2.500px) 0 36px / 100% 1.500px no-repeat; }
.marks { height: 30.500px; padding: 24.500px calc(33px / var(--k)) 0; display: flex; justify-content: space-between; }
.marks i { width: calc(8px / var(--k)); height: 6px; border-bottom: 1px solid #ddd; border-right: .8px solid #ddd; }
.marks i:last-child { border-right: 0; border-left: .8px solid #ddd; }
.scroll { width: calc(6.500px / var(--k)); margin-top: 1px; background: #cfcfcf; padding-left: 1px; }
.scroll i { display: block; width: 2.500px; height: 343px; background: #8a8a8a; }
.side { width: calc(24px / var(--k)); height: 405px; margin-top: 1px; }
.status { height: 8px; flex: none; display: grid; align-items: center; padding-left: calc(5px / var(--k)); font-size: 5px; line-height: 7px; letter-spacing: -.15px;
  grid-template-columns: calc(102px / var(--k)) calc(167px / var(--k)) calc(143.500px / var(--k)) calc(109.500px / var(--k)) calc(259px / var(--k)) auto; }
.status svg { width: 100%; height: 8px; }
```
